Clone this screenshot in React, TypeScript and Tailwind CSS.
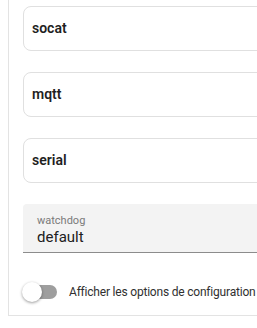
export default function App() {
  const items = ["socat", "mqtt", "serial"];

  return (
    <div
      className="w-[257px] h-[328px] overflow-hidden bg-white pl-2"
      style={{ fontFamily: "Roboto, 'Liberation Sans', sans-serif" }}
    >
      <div className="w-[300px] border-l border-b border-[#e3e3e3] pl-[14px] pt-[6px] pb-[13px]">
        {items.map((name) => (
          <div
            key={name}
            className="w-[280px] h-[45px] mb-[21px] flex items-center rounded-lg border border-[#e0e0e0] pl-[8px]"
          >
            <span className="text-[14px] font-semibold text-[#1f1f1f]">{name}</span>
          </div>
        ))}

        {/* watchdog select */}
        <div className="w-[280px] h-[49px] mt-[1px] rounded-t bg-[#f3f3f3] border-b border-[#8c8c8c] pl-[14px] pt-[10px]">
          <div className="text-[11px] leading-[13px] text-[#7a7a7a]">watchdog</div>
          <div className="text-[15px] leading-[20px] text-[#202020]">default</div>
        </div>

        {/* toggle */}
        <div className="mt-[29px] flex items-center h-[20px]">
          <div className="relative w-[34px] h-[14px] rounded-full bg-[#9e9e9e]">
            <div className="absolute left-[-1px] top-[-3px] w-[20px] h-[20px] rounded-full bg-white shadow-[0_1px_3px_rgba(0,0,0,0.4)]" />
          </div>
          <span className="ml-[12px] whitespace-nowrap text-[12px] tracking-[-0.2px] text-[#303030]">
            Afficher les options de configuration fines
          </span>
        </div>
      </div>
    </div>
  );
}
